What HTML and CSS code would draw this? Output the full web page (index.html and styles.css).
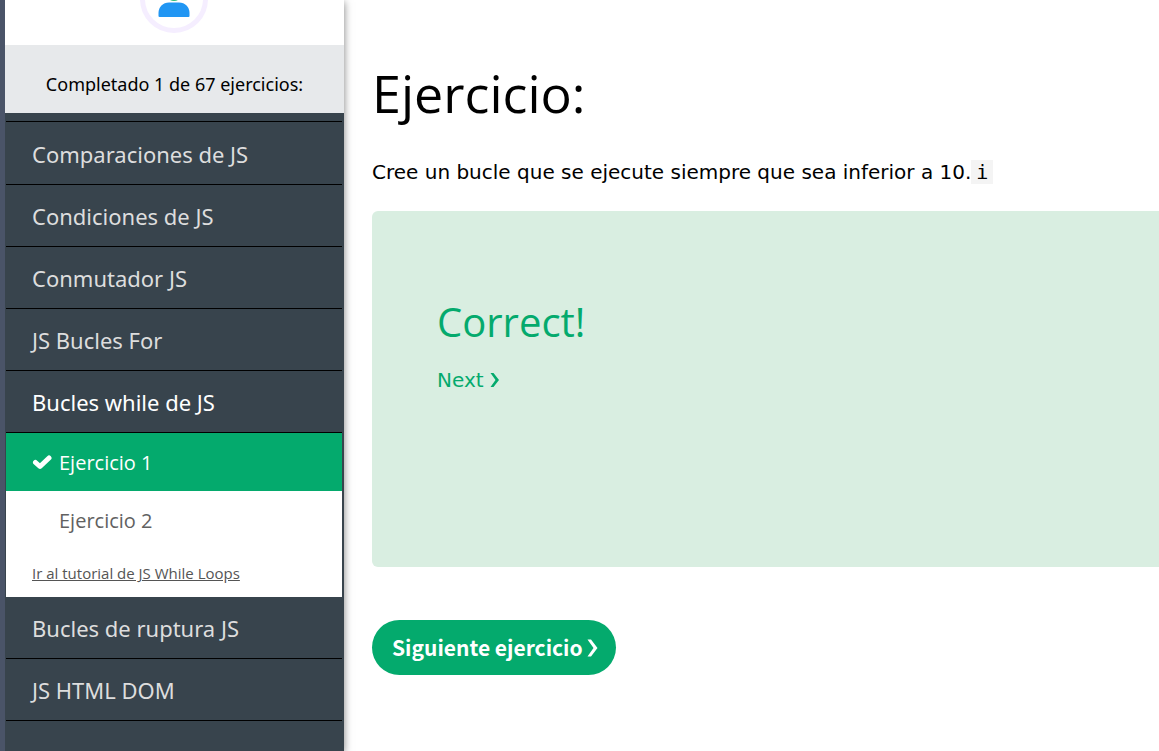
FILE: index.html
```html
<!DOCTYPE html>
<html lang="es">
<head>
<meta charset="utf-8">
<meta name="viewport" content="width=device-width, initial-scale=1">
<title>Ejercicios de JS</title>
<link rel="stylesheet" href="styles.css">
</head>
<body>
<div class="page">
  <aside class="sidebar">
    <div class="profile">
      <svg class="avatar" viewBox="0 0 68 34" width="68" height="34" aria-hidden="true">
        <circle cx="34" cy="-1" r="31.500" fill="#fff" stroke="#f5eeff" stroke-width="5"/>
        <circle cx="34" cy="-7" r="8" fill="#2ebd77"/>
        <path d="M18.500 16V13C18.500 7 23 2.500 29 2.500H39C45 2.500 49.500 7 49.500 13V16Q49.500 17 48.500 17H19.500Q18.500 17 18.500 16Z" fill="#2196f3"/>
      </svg>
    </div>
    <p class="progress">Completado 1 de 67 ejercicios:</p>
    <nav class="menu">
      <a class="topic" href="#comparaciones">Comparaciones de JS</a>
      <a class="topic" href="#condiciones">Condiciones de JS</a>
      <a class="topic" href="#conmutador">Conmutador JS</a>
      <a class="topic" href="#for">JS Bucles For</a>
      <a class="topic topic-open" href="#while">Bucles while de JS</a>
      <div class="exercises">
        <a class="exercise exercise-current" href="#ejercicio1">
          <svg class="check" viewBox="0 0 20 16" width="20" height="16" aria-hidden="true"><path d="M3.500 8.500L8 12.500L17 4" fill="none" stroke="#fff" stroke-width="5" stroke-linejoin="round" stroke-linecap="round"/></svg>
          <span>Ejercicio 1</span>
        </a>
        <a class="exercise" href="#ejercicio2"><span>Ejercicio 2</span></a>
        <a class="tutorial" href="#tutorial">Ir al tutorial de JS While Loops</a>
      </div>
      <a class="topic" href="#ruptura">Bucles de ruptura JS</a>
      <a class="topic" href="#dom">JS HTML DOM</a>
    </nav>
  </aside>
  <main class="content">
    <h1 class="title">Ejercicio:</h1>
    <p class="task">Cree un bucle que se ejecute siempre que sea inferior a 10.<code class="code">i</code></p>
    <section class="result">
      <h2 class="result-title">Correct!</h2>
      <a class="next" href="#ejercicio2">Next <svg viewBox="0 0 10 16" width="10" height="16" aria-hidden="true"><path d="M0.500 1H3.500L9 8L3.500 15H0.500L5.500 8Z" fill="#04aa6d"/></svg></a>
    </section>
    <button class="next-button" type="button">Siguiente ejercicio <svg viewBox="0 0 11 18" width="11" height="18" aria-hidden="true"><path d="M0.500 0.500H4L10.500 9L4 17.500H0.500L6.500 9Z" fill="#fff"/></svg></button>
  </main>
</div>
</body>
</html>
```
FILE: styles.css
```css
* {
  box-sizing: border-box;
}

body {
  margin: 0;
  background: #fff;
  color: #000;
  font-family: "Noto Sans", "Open Sans", sans-serif;
}

.page {
  display: flex;
  height: 100vh;
  overflow: hidden;
  border-left: 5px solid #4a5468;
}

.sidebar {
  display: flex;
  flex-direction: column;
  flex: 0 0 339px;
  background: #38444d;
  box-shadow: 0 2px 8px rgba(0, 0, 0, 0.5);
}

.profile {
  display: flex;
  justify-content: center;
  align-items: flex-start;
  flex: 0 0 45px;
  padding-right: 2px;
  background: #fff;
}

.avatar {
  display: block;
}

.progress {
  margin: 0;
  padding: 25px 16px 15px;
  background: #e7e9eb;
  font-size: 18px;
  line-height: 28px;
  text-align: center;
}

.menu {
  flex: 1;
  padding: 8px 2px 0 1px;
}

.topic {
  display: block;
  padding: 2px 26px 0;
  border-bottom: 1px solid #000;
  color: #ddd;
  font-size: 22px;
  line-height: 59px;
  text-decoration: none;
}

.topic:first-child {
  padding-top: 3px;
  border-top: 1px solid #000;
}

.topic-open {
  color: #fff;
}

.exercises {
  background: #fff;
}

.exercise {
  display: flex;
  align-items: center;
  height: 58px;
  padding-left: 53px;
  color: #616161;
  font-family: "Open Sans", sans-serif;
  font-size: 20px;
  text-decoration: none;
}

.exercise-current {
  gap: 7px;
  padding-left: 26px;
  background: #04aa6d;
  color: #fff;
}

.tutorial {
  display: block;
  height: 48px;
  padding: 0 26px;
  color: #555;
  font-family: "Open Sans", sans-serif;
  font-size: 15px;
  line-height: 48px;
}

.content {
  flex: 1;
  min-width: 0;
  padding: 58px 0 0 28px;
}

.title {
  margin: 0;
  font-family: "Open Sans", sans-serif;
  font-size: 52px;
  font-weight: 400;
  line-height: 70px;
}

.task {
  margin: 29px 0 24px;
  font-family: "DejaVu Sans", sans-serif;
  font-size: 20px;
  line-height: 30px;
}

.code {
  padding: 0 5px;
  background: #f4f4f4;
  font-family: "DejaVu Sans Mono", monospace;
  font-size: 20px;
}

.result {
  min-height: 356px;
  padding: 84px 65px;
  border-radius: 6px 0 0 6px;
  background: #d9eee1;
  color: #04aa6d;
}

.result-title {
  margin: 0 0 16px;
  font-family: "Open Sans", sans-serif;
  font-size: 40px;
  font-weight: 400;
  line-height: 54px;
}

.next {
  color: #04aa6d;
  font-family: "DejaVu Sans", sans-serif;
  font-size: 20px;
  line-height: 30px;
  text-decoration: none;
}

.next svg {
  vertical-align: -1px;
}

.next-button {
  margin-top: 53px;
  padding: 11px 18px 12px 20px;
  border: 0;
  border-radius: 28px;
  background: #04aa6d;
  color: #fff;
  font-family: "Noto Sans CJK SC", sans-serif;
  font-size: 21px;
  font-weight: 700;
  line-height: 32px;
}

.next-button svg {
  vertical-align: -1px;
}
```
